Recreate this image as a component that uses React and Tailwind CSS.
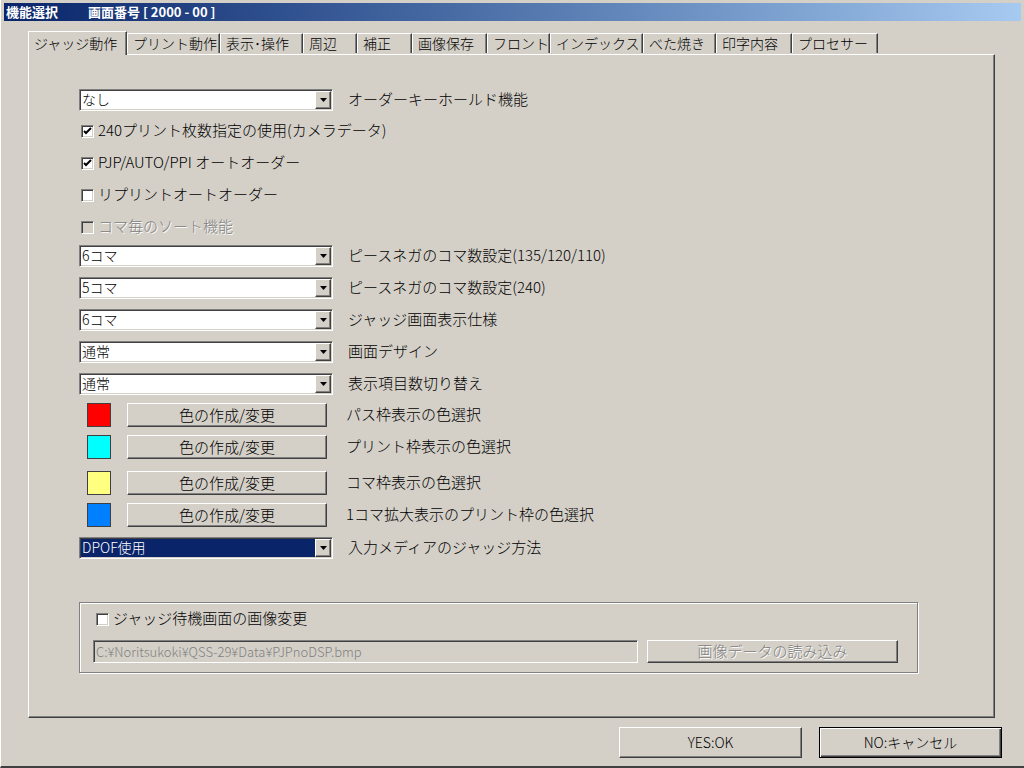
import React from 'react';

const FONT = '"Noto Sans CJK JP", "Noto Sans", sans-serif';

const sunken =
  'border border-t-[#808080] border-l-[#808080] border-r-white border-b-white shadow-[inset_1px_1px_0_#404040,inset_-1px_-1px_0_#d4d0c8]';
const raised =
  'border border-t-white border-l-white border-r-[#404040] border-b-[#404040] shadow-[inset_-1px_-1px_0_#808080]';

const tabs = [
  { label: 'ジャッジ動作', w: 99, active: true },
  { label: 'プリント動作', w: 93 },
  { label: '表示･操作', w: 83 },
  { label: '周辺', w: 54 },
  { label: '補正', w: 55 },
  { label: '画像保存', w: 75 },
  { label: 'フロント', w: 63 },
  { label: 'インデックス', w: 93 },
  { label: 'べた焼き', w: 73 },
  { label: '印字内容', w: 76 },
  { label: 'プロセサー', w: 86 },
];

function Combo({ value, selected }) {
  return (
    <div className={`w-[254px] h-[22px] flex items-center ${sunken} ${selected ? 'bg-[#0a246a]' : 'bg-white'}`}>
      <span className={`flex-1 pl-[2px] pb-[2px] text-[14px] leading-none ${selected ? 'text-white' : 'text-black'}`}>{value}</span>
      <div className={`w-[16px] h-[18px] mr-[1px] bg-[#d4d0c8] flex items-center justify-center ${raised}`}>
        <svg width="7" height="4" viewBox="0 0 7 4">
          <path d="M0 0h7L3.5 4z" fill="#000" />
        </svg>
      </div>
    </div>
  );
}

function Check({ checked, disabled }) {
  return (
    <div className={`w-[13px] h-[13px] flex items-center justify-center ${sunken} ${disabled ? 'bg-[#d4d0c8]' : 'bg-white'}`}>
      {checked && (
        <svg width="9" height="9" viewBox="0 0 9 9">
          <path d="M1 4l2 2 5-5" stroke="#000" strokeWidth="2" fill="none" />
        </svg>
      )}
    </div>
  );
}

function Label({ children, className = '' }) {
  return <span className={`text-[15px] leading-none pb-[3px] text-black whitespace-nowrap ${className}`}>{children}</span>;
}

function ComboRow({ value, label, mt = '', selected }) {
  return (
    <div className={`h-[32px] flex items-center ${mt}`}>
      <Combo value={value} selected={selected} />
      <Label className="ml-[15px]">{label}</Label>
    </div>
  );
}

function CheckRow({ label, checked, disabled, mt = '' }) {
  return (
    <div className={`h-[32px] flex items-center pl-[2px] ${mt}`}>
      <Check checked={checked} disabled={disabled} />
      <span
        className={`ml-[4px] pb-[3px] text-[15px] leading-none whitespace-nowrap ${
          disabled ? 'text-[#808080] [text-shadow:1px_1px_0_#fff]' : 'text-black'
        }`}
      >
        {label}
      </span>
    </div>
  );
}

function ColorRow({ color, label, mt = '' }) {
  return (
    <div className={`h-[32px] flex items-center ${mt}`}>
      <div className="w-[24px] h-[24px] ml-[8px] border border-[#404040]" style={{ background: color }} />
      <button className={`ml-[16px] w-[200px] h-[24px] pb-[2px] bg-[#d4d0c8] text-[15px] leading-none text-black ${raised}`}>
        色の作成/変更
      </button>
      <Label className="ml-[19px]">{label}</Label>
    </div>
  );
}

export default function App() {
  return (
    <div
      className="w-[1024px] h-[768px] bg-[#d4d0c8] flex flex-col pt-[3px] px-[3px] border-l border-l-white border-b-2 border-b-[#404040] overflow-hidden font-light"
      style={{ fontFamily: FONT }}
    >
      {/* title bar */}
      <div className="h-[18px] bg-gradient-to-r from-[#0a246a] to-[#a6caf0] flex items-center pl-[2px] pb-[1px] text-white font-bold text-[13px] leading-none">
        <span>機能選択</span>
        <span className="ml-[30px]">画面番号 [ 2000 - 00 ]</span>
      </div>

      {/* tabs */}
      <div className="ml-[24px] mt-[10px] h-[23px] flex items-end relative z-10">
        {tabs.map((t) => (
          <div
            key={t.label}
            style={{ width: t.w }}
            className={`flex items-center pl-[5px] bg-[#d4d0c8] border-t border-l border-t-white border-l-white border-r border-r-[#404040] shadow-[inset_-1px_0_0_#808080] ${
              t.active ? 'h-[24px] -mb-px pb-[2px]' : 'h-[20px] mb-[1px] pb-[2px]'
            }`}
          >
            <span className="text-[14px] leading-none text-black whitespace-nowrap">{t.label}</span>
          </div>
        ))}
      </div>

      {/* panel */}
      <div className="ml-[24px] w-[967px] h-[664px] border border-t-white border-l-white border-r-[#404040] border-b-[#404040] shadow-[inset_-1px_-1px_0_#808080] flex flex-col pl-[50px] pt-[29px]">
        <ComboRow value="なし" label="オーダーキーホールド機能" />
        <CheckRow checked label="240プリント枚数指定の使用(カメラデータ)" mt="-mt-[1px]" />
        <CheckRow checked label="PJP/AUTO/PPI オートオーダー" />
        <CheckRow label="リプリントオートオーダー" />
        <CheckRow disabled label="コマ毎のソート機能" />
        <ComboRow value="6コマ" label="ピースネガのコマ数設定(135/120/110)" mt="-mt-[3px]" />
        <ComboRow value="5コマ" label="ピースネガのコマ数設定(240)" />
        <ComboRow value="6コマ" label="ジャッジ画面表示仕様" />
        <ComboRow value="通常" label="画面デザイン" />
        <ComboRow value="通常" label="表示項目数切り替え" />
        <ColorRow color="#ff0000" label="パス枠表示の色選択" mt="-mt-[1px]" />
        <ColorRow color="#00ffff" label="プリント枠表示の色選択" />
        <ColorRow color="#ffff80" label="コマ枠表示の色選択" mt="mt-[4px]" />
        <ColorRow color="#0080ff" label="1コマ拡大表示のプリント枠の色選択" />
        <ComboRow value="DPOF使用" selected label="入力メディアのジャッジ方法" mt="mt-[1px]" />

        {/* group box */}
        <div className="mt-[38px] w-[839px] h-[71px] border border-[#808080] shadow-[1px_1px_0_#fff,inset_1px_1px_0_#fff] flex flex-col pl-[13px]">
          <div className="h-[32px] flex items-center pl-[3px]">
            <Check />
            <Label className="ml-[4px]">ジャッジ待機画面の画像変更</Label>
          </div>
          <div className="mt-[5px] flex items-center">
            <div className={`w-[545px] h-[23px] bg-[#d4d0c8] flex items-center pl-[2px] pb-[1px] ${sunken}`}>
              <span className="text-[13px] leading-none text-[#808080]">C:¥Noritsukoki¥QSS-29¥Data¥PJPnoDSP.bmp</span>
            </div>
            <button
              className={`ml-[9px] w-[251px] h-[23px] pb-[2px] bg-[#d4d0c8] text-[15px] leading-none text-[#808080] [text-shadow:1px_1px_0_#fff] ${raised}`}
            >
              画像データの読み込み
            </button>
          </div>
        </div>
      </div>

      {/* bottom buttons */}
      <div className="mt-[9px] flex justify-end pr-[19px] gap-[17px]">
        <button className={`w-[183px] h-[31px] pb-[2px] bg-[#d4d0c8] text-[14px] leading-none text-black ${raised}`}>YES:OK</button>
        <button className="w-[183px] h-[31px] pb-[2px] bg-[#d4d0c8] text-[14px] leading-none text-black border border-black shadow-[inset_1px_1px_0_#fff,inset_-1px_-1px_0_#404040,inset_-2px_-2px_0_#808080]">
          NO:キャンセル
        </button>
      </div>
    </div>
  );
}
